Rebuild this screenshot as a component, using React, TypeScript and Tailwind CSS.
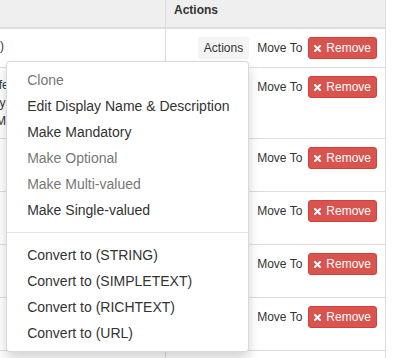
import React from 'react';

const rows = [
    { lines: ["Full Display Name (STRING)"] },
    {
        lines: [
            "This is a description for this feature, shown on the card",
            "and is shown in the summary of the item page",
            "view, as well as in the lists. More details",
        ],
    },
    { lines: ["Identifier", "Used internally"] },
    { lines: ["Title", "Shown in list"] },
    { lines: ["Notes", "Free text"] },
    { lines: ["Link", "Web address"] },
    { lines: ["Owner"] },
];

const menuItems: ({ label: string; disabled?: boolean } | "divider")[] = [
    { label: "Clone", disabled: true },
    { label: "Edit Display Name & Description" },
    { label: "Make Mandatory" },
    { label: "Make Optional", disabled: true },
    { label: "Make Multi-valued", disabled: true },
    { label: "Make Single-valued" },
    "divider",
    { label: "Convert to (STRING)" },
    { label: "Convert to (SIMPLETEXT)" },
    { label: "Convert to (RICHTEXT)" },
    { label: "Convert to (URL)" },
];

const ActionsMenu: React.FC = () => (
    <ul className="absolute right-0 top-full mt-[2px] w-[243px] z-10 bg-white border border-[rgba(0,0,0,0.15)] rounded-[4px] shadow-[0_6px_12px_rgba(0,0,0,0.175)] py-[5px] text-left text-[14px] leading-[20px]">
        {menuItems.map((item, i) =>
            item === "divider" ? (
                <li key={i} className="h-px my-[9px] bg-[#e5e5e5]" />
            ) : (
                <li
                    key={i}
                    className={`px-5 py-[3px] whitespace-nowrap ${item.disabled ? "text-[#777]" : "text-[#333]"}`}
                >
                    {item.label}
                </li>
            )
        )}
    </ul>
);

const RemoveButton: React.FC = () => (
    <button className="flex items-center h-[22px] px-[5px] border border-[#d43f3a] bg-[#d9534f] text-white rounded-[3px] text-[12px] leading-[18px]">
        <svg width="7" height="7" viewBox="0 0 7 7" className="mr-[5px]">
            <path d="M1 1L6 6M6 1L1 6" stroke="white" strokeWidth="2" strokeLinecap="square" />
        </svg>
        Remove
    </button>
);

export default function App() {
    return (
        <div className="w-[397px] h-[358px] overflow-hidden bg-white text-[#333] font-['Liberation_Sans',Arial,sans-serif] text-[12px] leading-[18px]">
            <div className="-mt-[7px] -ml-[158px] w-[544px]">
                {/* header */}
                <div className="flex bg-[#efefef] border-b-2 border-[#ddd]">
                    <div className="w-[324px] shrink-0 border-r border-[#ddd] p-2" />
                    <div className="w-[220px] shrink-0 border-r border-[#ddd] p-2 font-bold">Actions</div>
                </div>

                {rows.map((row, i) => (
                    <div key={i} className="flex border-b border-[#ddd]">
                        <div className="w-[324px] shrink-0 border-r border-[#ddd] p-2 whitespace-nowrap">
                            {row.lines.map((line, j) => (
                                <div key={j}>{line}</div>
                            ))}
                        </div>
                        <div className="w-[220px] shrink-0 border-r border-[#ddd] p-2 flex justify-end items-start">
                            <div className="flex items-center">
                                <div className="relative">
                                    <button className="h-[22px] px-[5px] border border-transparent bg-[#f4f4f4] rounded-[3px] text-[12px] leading-[18px] text-[#333]">
                                        Actions
                                    </button>
                                    {i === 0 && <ActionsMenu />}
                                </div>
                                <span className="ml-2 mr-[6px]">Move To</span>
                                <RemoveButton />
                            </div>
                        </div>
                    </div>
                ))}
            </div>
        </div>
    );
}
